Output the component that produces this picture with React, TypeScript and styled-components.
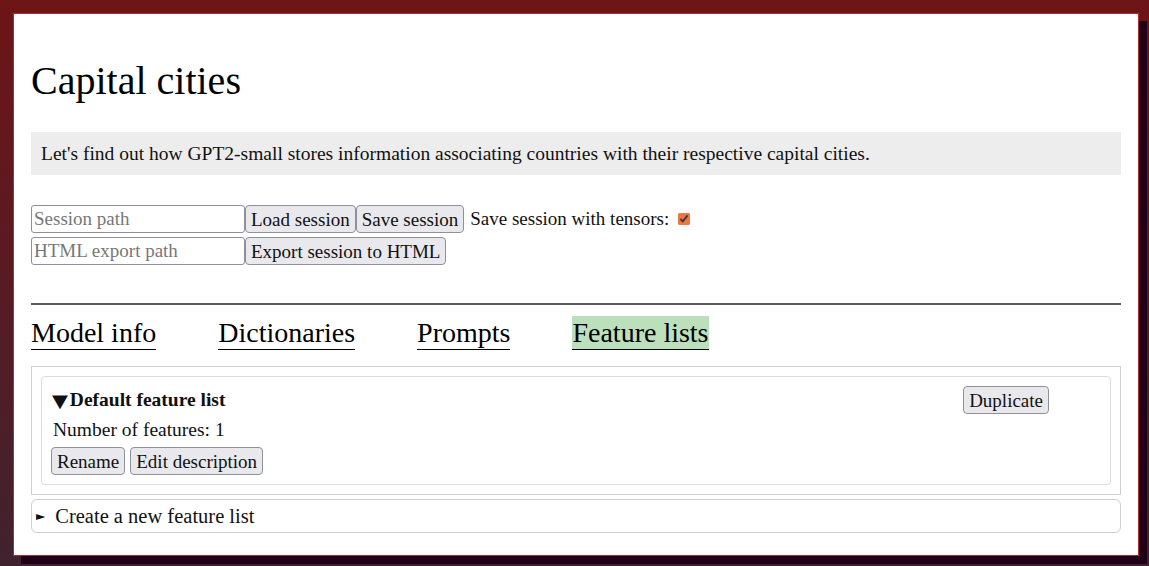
import React, { useState } from 'react';
import styled, { createGlobalStyle } from 'styled-components';

const GlobalStyle = createGlobalStyle`
  html, body {
    margin: 0;
    padding: 0;
    height: 100%;
  }
  body {
    background: linear-gradient(180deg, #6d1517 0%, #5a1a22 45%, #40222e 100%);
    font-family: "Liberation Serif", "DejaVu Serif", serif;
    color: #111;
    overflow: hidden;
  }
`;

const Page = styled.div`
  min-height: 100vh;
  box-sizing: border-box;
  padding: 13px 10px 0 13px;
`;

const Card = styled.main`
  background: #fff;
  border: 1px solid #b8282a;
  box-shadow: 8px 8px 0 #200018;
  padding: 0 17px 22px;
`;

const Title = styled.h1`
  font-size: 40px;
  line-height: 46px;
  font-weight: normal;
  margin: 44px 0 0;
  color: #000;
`;

const Description = styled.p`
  margin: 28px 0 0;
  padding: 10px;
  background: #ededed;
  font-size: 19.5px;
  line-height: 23px;
`;

const Controls = styled.div`
  margin-top: 30px;
  display: flex;
  flex-direction: column;
  gap: 4px;
`;

const ControlRow = styled.div`
  display: flex;
  align-items: center;
  height: 28px;
`;

const PathInput = styled.input`
  box-sizing: border-box;
  width: 214px;
  height: 28px;
  border: 1px solid #8f8f9d;
  border-radius: 3px;
  padding: 1px 2px;
  font-family: inherit;
  font-size: 19px;
  color: #111;
  &::placeholder {
    color: #777;
  }
`;

const Button = styled.button`
  box-sizing: border-box;
  height: 28px;
  padding: 0 5px;
  background: #e9e9ed;
  border: 1px solid #8f8f9d;
  border-radius: 4px;
  font-family: inherit;
  font-size: 19px;
  color: #111;
  line-height: 1;
  white-space: nowrap;
`;

const CheckLabel = styled.label`
  display: flex;
  align-items: center;
  margin-left: 6px;
  font-size: 19px;
  gap: 9px;
  input {
    margin: 0;
    width: 12px;
    height: 12px;
    accent-color: #ef7640;
  }
`;

const Rule = styled.hr`
  margin: 38px 0 0;
  border: none;
  height: 2px;
  background: #5b5b5b;
`;

const Tabs = styled.nav`
  display: flex;
  gap: 62px;
  margin-top: 11px;
`;

const Tab = styled.span<{ $active?: boolean }>`
  font-size: 28px;
  line-height: 33px;
  color: #000;
  border-bottom: 1px solid #000;
  background: ${(p) => (p.$active ? '#bcdfbc' : 'transparent')};
  cursor: pointer;
`;

const Panel = styled.section`
  margin-top: 16px;
  border: 1px solid #cfcfcf;
  padding: 9px;
`;

const ListBox = styled.div`
  border: 1px solid #ddd;
  border-radius: 4px;
  padding: 9px 10px;
`;

const ListHeader = styled.div`
  display: flex;
  align-items: center;
  justify-content: space-between;
  padding-right: 51px;
  height: 28px;
`;

const ListName = styled.span`
  display: flex;
  align-items: center;
  gap: 2px;
  font-size: 19.5px;
  font-weight: bold;
  color: #111;
`;

const DownCaret = styled.span`
  font-size: 18px;
  font-weight: normal;
  font-family: "DejaVu Sans", sans-serif;
  transform: scaleX(1.15);
  transform-origin: left center;
  margin-right: 2px;
`;

const Count = styled.div`
  margin-top: 4px;
  font-size: 19.5px;
  line-height: 24px;
  padding-left: 1px;
`;

const ButtonRow = styled.div`
  display: flex;
  gap: 5px;
  margin-top: 5px;
  margin-left: -1px;
`;

const Details = styled.details`
  margin-top: 4px;
  border: 1px solid #cfcfcf;
  border-radius: 6px;
  padding: 4px 4px;
  summary {
    font-size: 20.5px;
    line-height: 24px;
    cursor: pointer;
    list-style: none;
    display: flex;
    align-items: center;
    gap: 10px;
  }
  summary::-webkit-details-marker {
    display: none;
  }
`;

const Caret = styled.span`
  font-size: 12px;
  font-family: "DejaVu Sans", sans-serif;
`;

const tabs = ['Model info', 'Dictionaries', 'Prompts', 'Feature lists'];

export default function App() {
  const [withTensors, setWithTensors] = useState(true);
  const [active, setActive] = useState('Feature lists');

  return (
    <>
      <GlobalStyle />
      <Page>
        <Card>
          <Title>Capital cities</Title>
          <Description>
            Let's find out how GPT2-small stores information associating countries with their respective capital cities.
          </Description>

          <Controls>
            <ControlRow>
              <PathInput placeholder="Session path" />
              <Button>Load session</Button>
              <Button>Save session</Button>
              <CheckLabel>
                Save session with tensors:
                <input
                  type="checkbox"
                  checked={withTensors}
                  onChange={(e) => setWithTensors(e.target.checked)}
                />
              </CheckLabel>
            </ControlRow>
            <ControlRow>
              <PathInput placeholder="HTML export path" />
              <Button>Export session to HTML</Button>
            </ControlRow>
          </Controls>

          <Rule />

          <Tabs>
            {tabs.map((t) => (
              <Tab key={t} $active={t === active} onClick={() => setActive(t)}>
                {t}
              </Tab>
            ))}
          </Tabs>

          <Panel>
            <ListBox>
              <ListHeader>
                <ListName>
                  <DownCaret>▼</DownCaret>
                  Default feature list
                </ListName>
                <Button>Duplicate</Button>
              </ListHeader>
              <Count>Number of features: 1</Count>
              <ButtonRow>
                <Button>Rename</Button>
                <Button>Edit description</Button>
              </ButtonRow>
            </ListBox>
          </Panel>

          <Details>
            <summary>
              <Caret>►</Caret>
              Create a new feature list
            </summary>
          </Details>
        </Card>
      </Page>
    </>
  );
}
